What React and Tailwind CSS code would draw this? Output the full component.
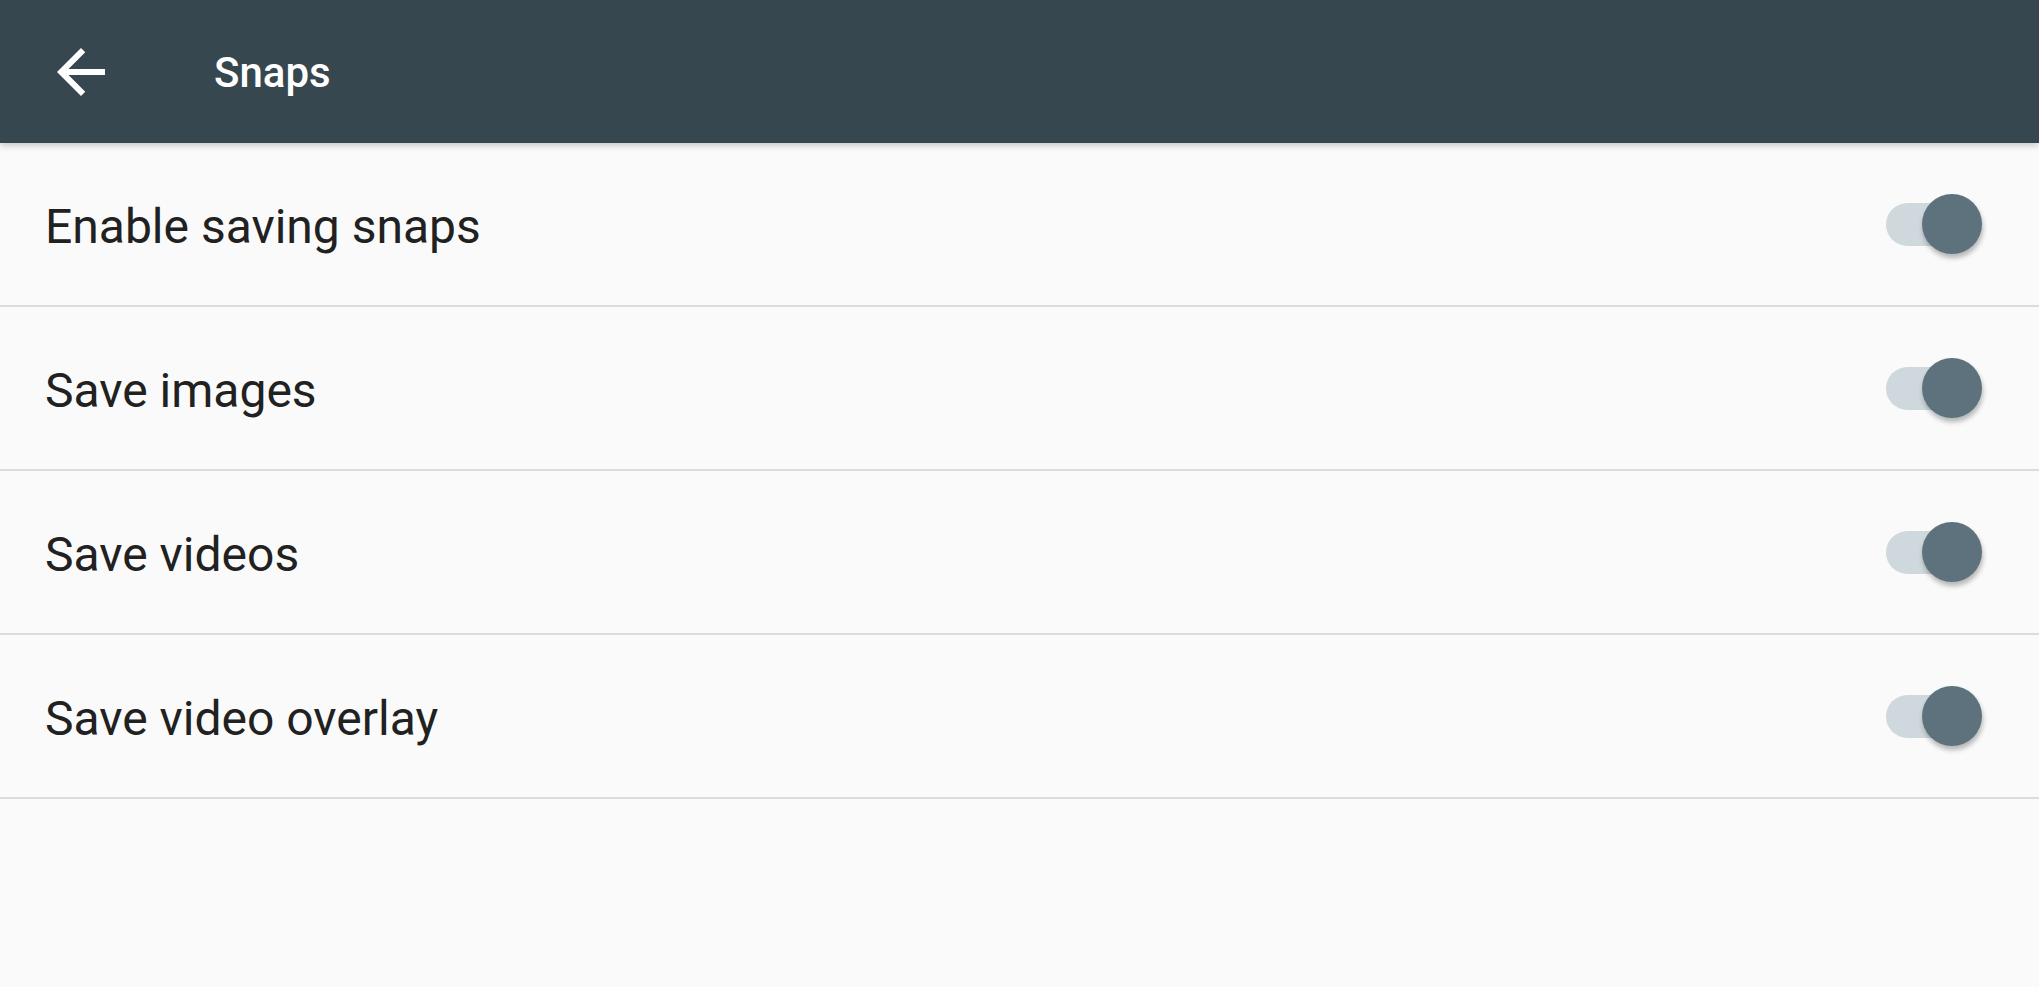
import React from 'react'

const items = ['Enable saving snaps', 'Save images', 'Save videos', 'Save video overlay']

const Toggle = () => {
  return (
    <div className="relative w-[96px] h-[60px] mr-[57px] shrink-0">
      {/* Track */}
      <div className="absolute left-0 top-[9px] w-[88px] h-[43px] rounded-full bg-[#cfd8dc]" />
      {/* Thumb */}
      <div className="absolute left-[36px] top-0 w-[60px] h-[60px] rounded-full bg-[#5e727d] shadow-[1px_4px_5px_rgba(0,0,0,0.28)]" />
    </div>
  )
}

const App = () => {
  return (
    <div className="w-[2039px] h-[987px] bg-[#fafafa] overflow-hidden" style={{ fontFamily: 'Roboto, "Liberation Sans", sans-serif' }}>
      {/* Toolbar */}
      <div className="relative z-10 h-[143px] bg-[#37474f] flex items-center shadow-[0_3px_6px_rgba(0,0,0,0.18)]">
        <svg className="ml-[45px] w-[72px] h-[72px]" viewBox="0 0 24 24" fill="#ffffff">
          <path d="M20 11H7.83l5.59-5.59L12 4l-8 8 8 8 1.41-1.41L7.83 13H20v-2z" />
        </svg>
        <div className="ml-[97px] text-white text-[42px] font-medium leading-none pt-[3px]">Snaps</div>
      </div>

      {/* Settings list */}
      <div className="flex flex-col">
        {items.map((label) => (
          <div key={label} className="h-[164px] flex items-center justify-between border-b-2 border-[#dcdcdc]">
            <div className="ml-[45px] text-[48px] text-[#212121] leading-none pt-[5px]">{label}</div>
            <Toggle />
          </div>
        ))}
      </div>
    </div>
  )
}

export default App
